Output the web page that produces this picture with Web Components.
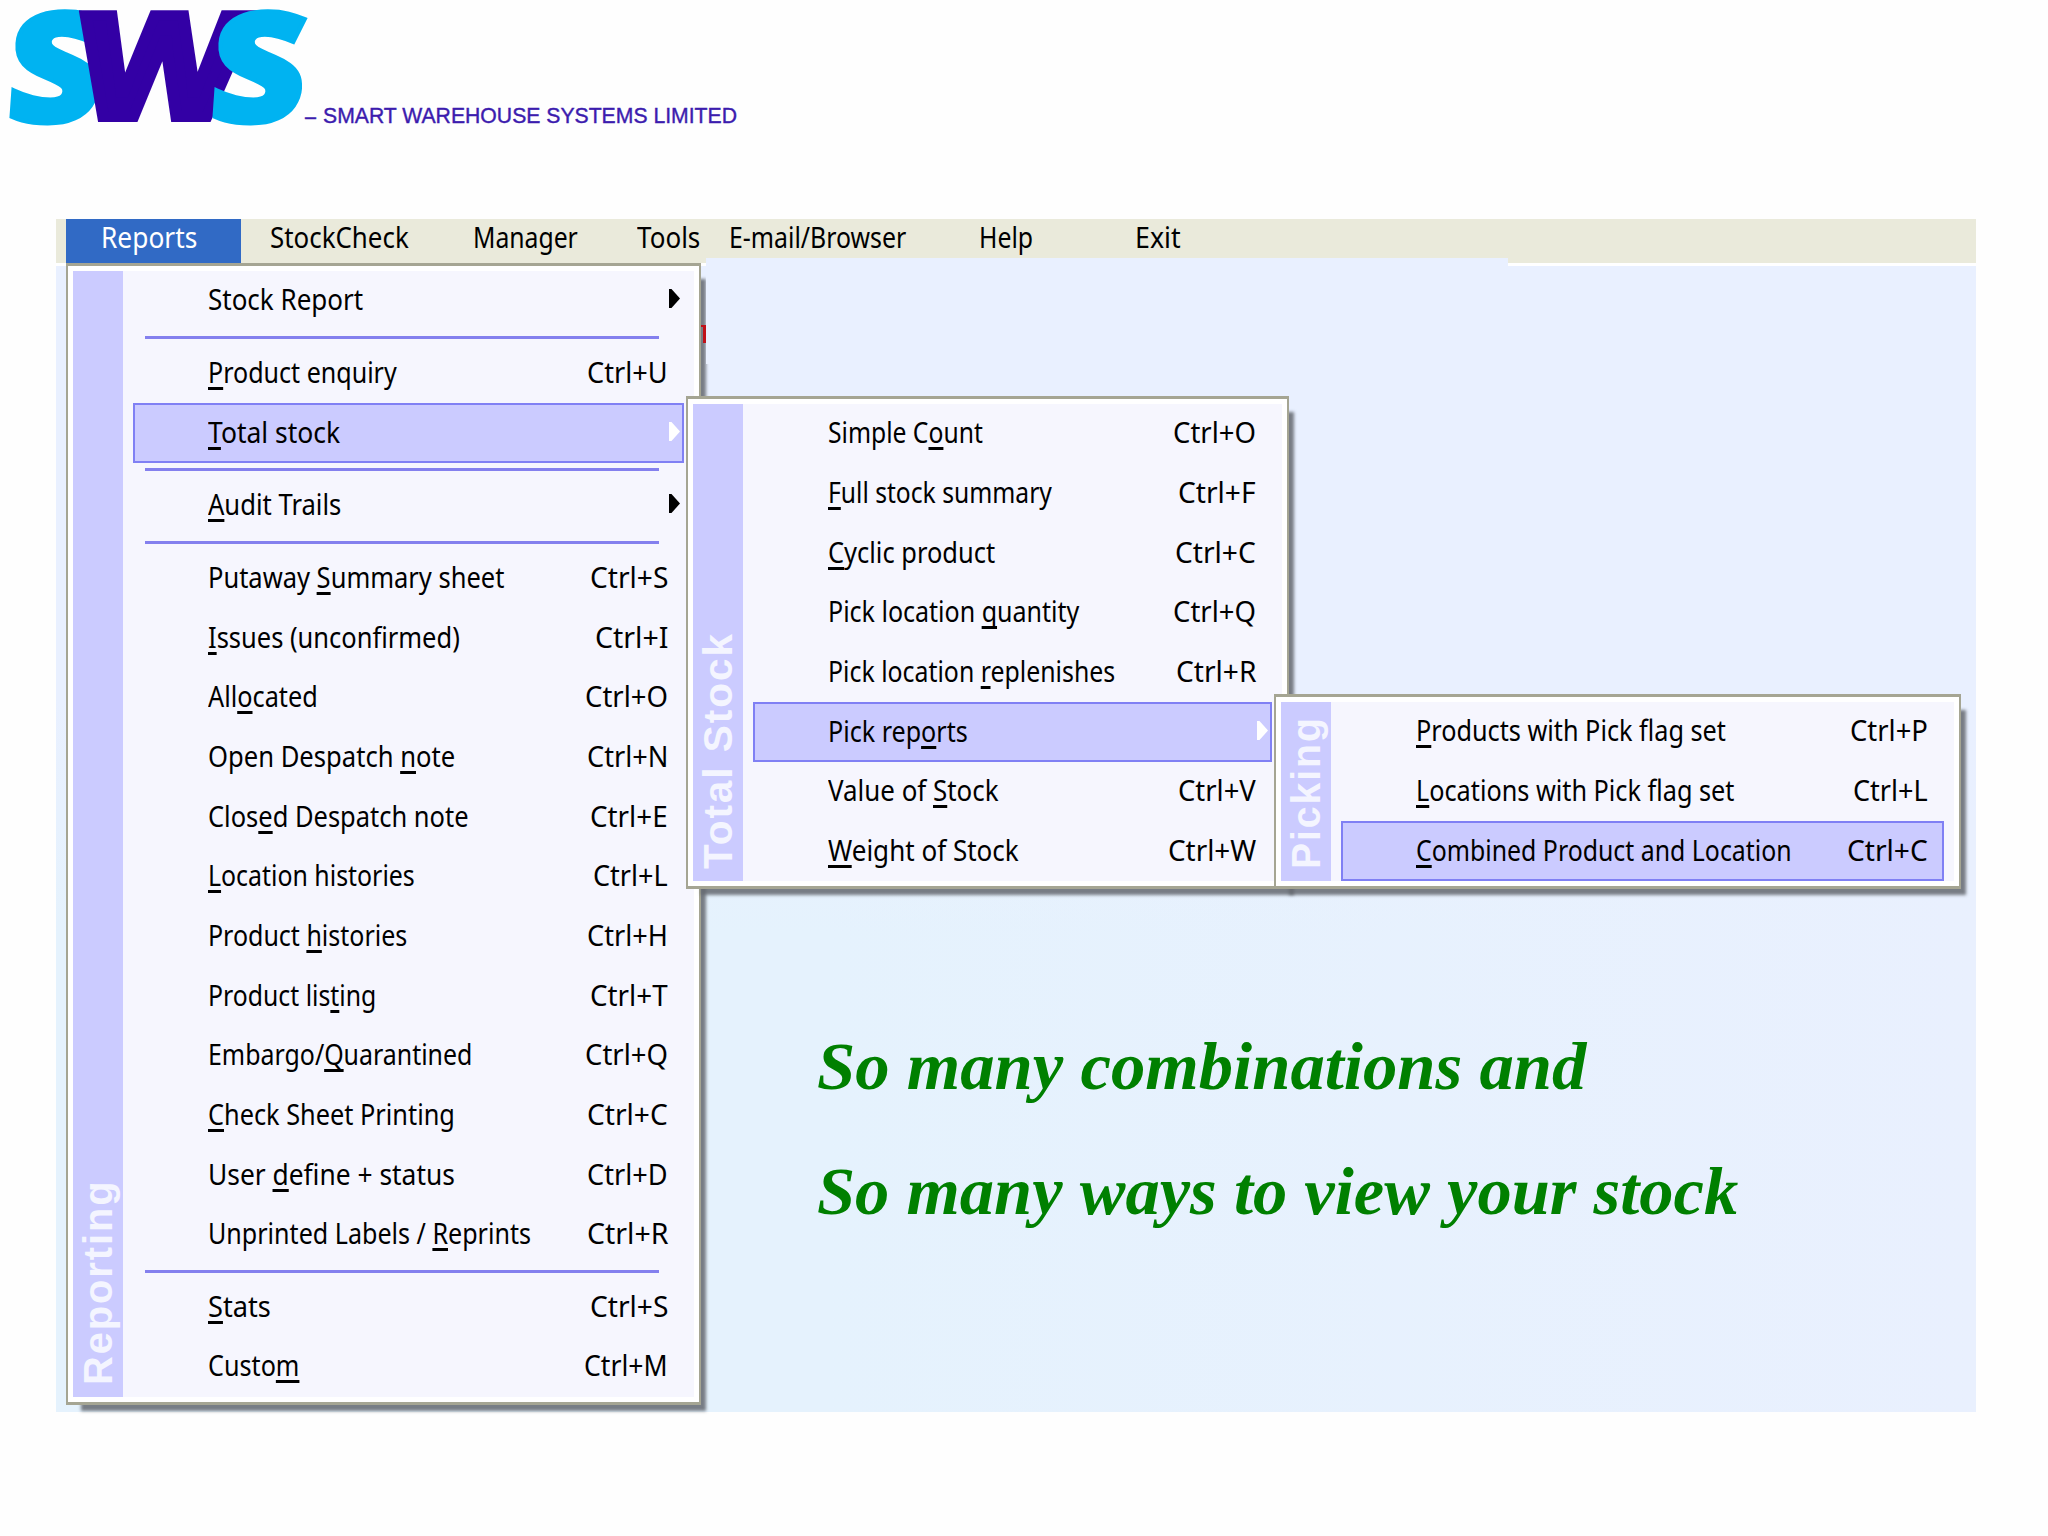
<!DOCTYPE html>
<html lang="en">
<head>
<meta charset="utf-8">
<title>Smart Warehouse Systems</title>
<style>
  html, body { margin: 0; background: #fefefe; }
  body { width: 2048px; height: 1536px; overflow: hidden; }
</style>
</head>
<body>
<sws-page>
  <sws-logo slot="logo"></sws-logo>

  <menu-bar slot="bar">
    <menu-title gap="10" pad="36" box="175" w="94" active>Reports</menu-title>
    <menu-title gap="30" w="137">StockCheck</menu-title>
    <menu-title gap="66" w="103">Manager</menu-title>
    <menu-title gap="61" w="61">Tools</menu-title>
    <menu-title gap="31" w="175">E-mail/Browser</menu-title>
    <menu-title gap="75" w="52">Help</menu-title>
    <menu-title gap="104" w="44">Exit</menu-title>
  </menu-bar>

  <drop-menu slot="menus" x="66" y="263" width="635" label="Reporting" length="201">
    <menu-item w="153" sub>Stock Report</menu-item>
    <menu-rule></menu-rule>
    <menu-item w="187" key="U" kw="79"><u>P</u>roduct enquiry</menu-item>
    <menu-item w="130" sub selected><u>T</u>otal stock</menu-item>
    <menu-rule></menu-rule>
    <menu-item w="131" sub><u>A</u>udit Trails</menu-item>
    <menu-rule></menu-rule>
    <menu-item w="294" key="S" kw="76">Putaway <u>S</u>ummary sheet</menu-item>
    <menu-item w="250" key="I" kw="71"><u>I</u>ssues (unconfirmed)</menu-item>
    <menu-item w="108" key="O" kw="81">All<u>o</u>cated</menu-item>
    <menu-item w="245" key="N" kw="79">Open Despatch <u>n</u>ote</menu-item>
    <menu-item w="259" key="E" kw="76">Clos<u>e</u>d Despatch note</menu-item>
    <menu-item w="205" key="L" kw="73"><u>L</u>ocation histories</menu-item>
    <menu-item w="197" key="H" kw="79">Product <u>h</u>istories</menu-item>
    <menu-item w="166" key="T" kw="76">Product lis<u>t</u>ing</menu-item>
    <menu-item w="262" key="Q" kw="81">Embargo/<u>Q</u>uarantined</menu-item>
    <menu-item w="245" key="C" kw="79"><u>C</u>heck Sheet Printing</menu-item>
    <menu-item w="245" key="D" kw="79">User <u>d</u>efine + status</menu-item>
    <menu-item w="321" key="R" kw="79">Unprinted Labels / <u>R</u>eprints</menu-item>
    <menu-rule></menu-rule>
    <menu-item w="61" key="S" kw="76"><u>S</u>tats</menu-item>
    <menu-item w="89" key="M" kw="82">Custo<u>m</u></menu-item>
  </drop-menu>

  <drop-menu slot="menus" x="686" y="396" width="603" label="Total Stock" length="232">
    <menu-item w="153" key="O" kw="81">Simple C<u>o</u>unt</menu-item>
    <menu-item w="222" key="F" kw="76"><u>F</u>ull stock summary</menu-item>
    <menu-item w="165" key="C" kw="79"><u>C</u>yclic product</menu-item>
    <menu-item w="249" key="Q" kw="81">Pick location <u>q</u>uantity</menu-item>
    <menu-item w="285" key="R" kw="78">Pick location <u>r</u>eplenishes</menu-item>
    <menu-item w="138" sub selected>Pick rep<u>o</u>rts</menu-item>
    <menu-item w="169" key="V" kw="76">Value of <u>S</u>tock</menu-item>
    <menu-item w="189" key="W" kw="86"><u>W</u>eight of Stock</menu-item>
  </drop-menu>

  <drop-menu slot="menus" x="1274" y="694" width="687" label="Picking" length="148">
    <menu-item w="308" key="P" kw="76"><u>P</u>roducts with Pick flag set</menu-item>
    <menu-item w="316" key="L" kw="73"><u>L</u>ocations with Pick flag set</menu-item>
    <menu-item w="374" key="C" kw="79" selected><u>C</u>ombined Product and Location</menu-item>
  </drop-menu>

  <tag-line slot="lines" w="769">So many combinations and</tag-line>
  <tag-line slot="lines" w="921">So many ways to view your stock</tag-line>
</sws-page>

<script>
// Text squeezed or stretched to a given width in px
class FitText extends HTMLElement {
  constructor() {
    super();
    this.attachShadow({ mode: "open" });
    this.shadowRoot.innerHTML = `
      <style>
        :host { display: block; white-space: nowrap; }
        span { display: block; width: max-content; transform-origin: 0 50%; }
      </style>
      <span><slot></slot></span>
    `;
  }

  connectedCallback() {
    this.fit();
  }

  fit() {
    const width = Number(this.getAttribute("w"));
    const span = this.shadowRoot.querySelector("span");
    this.style.width = width + "px";
    // offsetWidth ignores transforms, so rotated labels measure the same way
    if (span.offsetWidth > 0) {
      span.style.transform = `scaleX(${width / span.offsetWidth})`;
    }
  }
}

class SwsLogo extends HTMLElement {
  constructor() {
    super();
    this.attachShadow({ mode: "open" });
    this.shadowRoot.innerHTML = `
      <style>
        :host { display: block; height: 219px; }
        svg { display: block; overflow: visible; }
        .s { font: 800 153px "Open Sans", sans-serif; fill: #00b3f1; stroke: #00b3f1; stroke-width: 4px; }
        .w { font: bold 148px "Liberation Sans", Arial, sans-serif; fill: #3300a5; stroke: #3300a5; stroke-width: 10px; }
        .name { font: 22.5px "Liberation Sans", Arial, sans-serif; fill: #3c1cae; stroke: #3c1cae; stroke-width: 0.4px; }
      </style>
      <svg width="760" height="140" viewBox="0 0 760 140">
        <text class="s" transform="translate(4 122) skewX(-4)" textLength="96" lengthAdjust="spacingAndGlyphs">S</text>
        <text class="w" transform="translate(72 117) skewX(-7.6)" textLength="166" lengthAdjust="spacingAndGlyphs">W</text>
        <text class="s" transform="translate(207 122) skewX(-4)" textLength="96" lengthAdjust="spacingAndGlyphs">S</text>
        <text class="name" x="305" y="124" textLength="11" lengthAdjust="spacingAndGlyphs">–</text>
        <text class="name" x="323" y="122.5" textLength="414" lengthAdjust="spacingAndGlyphs">SMART WAREHOUSE SYSTEMS LIMITED</text>
      </svg>
    `;
  }
}

class MenuBar extends HTMLElement {
  constructor() {
    super();
    this.attachShadow({ mode: "open" });
    this.shadowRoot.innerHTML = `
      <style>
        :host { display: flex; height: 44px; background: #eaeadb; border-bottom: 3px solid #fff; }
      </style>
      <slot></slot>
    `;
  }
}

class MenuTitle extends HTMLElement {
  constructor() {
    super();
    this.attachShadow({ mode: "open" });
  }

  connectedCallback() {
    const pad = Number(this.getAttribute("pad") || 0);
    const w = Number(this.getAttribute("w"));
    const box = Number(this.getAttribute("box") || w);
    this.shadowRoot.innerHTML = `
      <style>
        :host {
          display: block;
          box-sizing: border-box;
          flex: none;
          width: ${box}px;
          height: 44px;
          margin-left: ${this.getAttribute("gap")}px;
          padding-left: ${pad}px;
          line-height: 36px;
          color: #000;
        }
        :host([active]) { background: #316ac5; color: #fff; }
        fit-text { margin-left: -1px; }
      </style>
      <fit-text w="${w + 2}"><slot></slot></fit-text>
    `;
  }
}

class MenuItem extends HTMLElement {
  constructor() {
    super();
    this.attachShadow({ mode: "open" });
  }

  connectedCallback() {
    const key = this.getAttribute("key");
    const keyWidth = Number(this.getAttribute("kw")) + 2;
    const accel = key ? `<fit-text w="${keyWidth}">Ctrl+${key}</fit-text>` : "";
    const arrow = this.hasAttribute("sub")
      ? `<svg width="11" height="20" viewBox="0 0 11 20"><path d="M0 0h2.5l8.5 9.5l-8.5 9.5h-2.5z" fill="currentColor"/></svg>`
      : "";
    this.shadowRoot.innerHTML = `
      <style>
        :host {
          display: flex;
          box-sizing: border-box;
          flex: 0 0 59.67px;
          align-items: center;
          justify-content: space-between;
          margin-left: 10px;
          padding: 0 14px 0 73px;
          border: 2px solid transparent;
          line-height: 52px;
        }
        :host([sub]) { padding-right: 2px; }
        :host([selected]) { background: #cbcbff; border-color: #8080f4; }
        fit-text { margin-top: -3px; }
        ::slotted(u) { text-decoration-thickness: 3px; text-underline-offset: 4px; text-decoration-skip-ink: none; }
        svg { flex: none; margin-top: -3px; color: #000; }
        :host([selected]) svg { color: #fff; }
      </style>
      <fit-text w="${Number(this.getAttribute("w")) + 2}"><slot></slot></fit-text>
      ${accel}${arrow}
    `;
  }
}

class MenuRule extends HTMLElement {
  constructor() {
    super();
    this.attachShadow({ mode: "open" });
    this.shadowRoot.innerHTML = `
      <style>
        :host { display: flex; flex: 0 0 13px; align-items: center; padding: 0 25px 0 22px; }
        div { flex: 1; height: 3px; background: #8480ee; }
      </style>
      <div></div>
    `;
  }
}

class DropMenu extends HTMLElement {
  constructor() {
    super();
    this.attachShadow({ mode: "open" });
  }

  connectedCallback() {
    this.shadowRoot.innerHTML = `
      <style>
        :host {
          position: absolute;
          left: ${this.getAttribute("x")}px;
          top: ${this.getAttribute("y")}px;
          width: ${this.getAttribute("width")}px;
          display: flex;
          box-sizing: border-box;
          padding: 5px 5px 5px;
          border: solid #a5a593;
          border-width: 3px 2px;
          background: #fff;
          box-shadow: 10px 11px 3px -5px rgba(100, 104, 112, 0.85);
        }
        #strip {
          display: flex;
          flex: none;
          box-sizing: border-box;
          width: 50px;
          padding-bottom: 12px;
          align-items: flex-end;
          background: #cbcbff;
        }
        #strip fit-text {
          flex: none;
          height: 50px;
          margin-right: -300px;
          transform: translateX(50px) rotate(-90deg);
          transform-origin: 0 100%;
          font: bold 41px/51px "Liberation Sans", Arial, sans-serif;
          letter-spacing: 2px;
          color: #f4f5ff;
        }
        #items {
          display: flex;
          flex: 1;
          flex-direction: column;
          padding-right: 10px;
          background: #f6f6fe;
        }
      </style>
      <div id="strip"><fit-text w="${Number(this.getAttribute("length")) + 5}">${this.getAttribute("label")}</fit-text></div>
      <div id="items"><slot></slot></div>
    `;
  }
}

class TagLine extends HTMLElement {
  constructor() {
    super();
    this.attachShadow({ mode: "open" });
  }

  connectedCallback() {
    this.shadowRoot.innerHTML = `
      <style>
        :host {
          display: block;
          height: 124.5px;
          font: italic bold 68px/124.5px "Liberation Serif", "Times New Roman", serif;
          color: #008000;
        }
      </style>
      <fit-text w="${this.getAttribute("w")}"><slot></slot></fit-text>
    `;
  }
}

class SwsPage extends HTMLElement {
  constructor() {
    super();
    this.attachShadow({ mode: "open" });
    this.shadowRoot.innerHTML = `
      <style>
        :host {
          display: block;
          position: relative;
          width: 2048px;
          height: 1536px;
          font: 28.5px/1 "Noto Sans", Tahoma, sans-serif;
          color: #000;
        }
        #app {
          box-sizing: border-box;
          width: 1920px;
          height: 1193px;
          margin-left: 56px;
          background:
            linear-gradient(to bottom, #e9f0ff 40%, #e9f0ff00 60%),
            linear-gradient(to right, #e5f2fd 40%, #e9f0fe);
        }
        #patch { position: absolute; left: 706px; top: 258px; width: 802px; height: 106px; background: #e9f0ff; }
        #mark { position: absolute; left: 701px; top: 325px; width: 2px; height: 16px; border: solid #c01018; border-width: 2px 3px 0 0; }
        #lines { padding: 738px 0 0 761px; }
      </style>
      <slot name="logo"></slot>
      <div id="app">
        <slot name="bar"></slot>
        <div id="lines"><slot name="lines"></slot></div>
      </div>
      <slot name="menus"></slot>
      <div id="patch"></div>
      <div id="mark"></div>
    `;
  }
}

customElements.define("sws-page", SwsPage);
customElements.define("sws-logo", SwsLogo);
customElements.define("menu-bar", MenuBar);
customElements.define("menu-title", MenuTitle);
customElements.define("drop-menu", DropMenu);
customElements.define("menu-rule", MenuRule);
customElements.define("menu-item", MenuItem);
customElements.define("tag-line", TagLine);
customElements.define("fit-text", FitText);
</script>
</body>
</html>
